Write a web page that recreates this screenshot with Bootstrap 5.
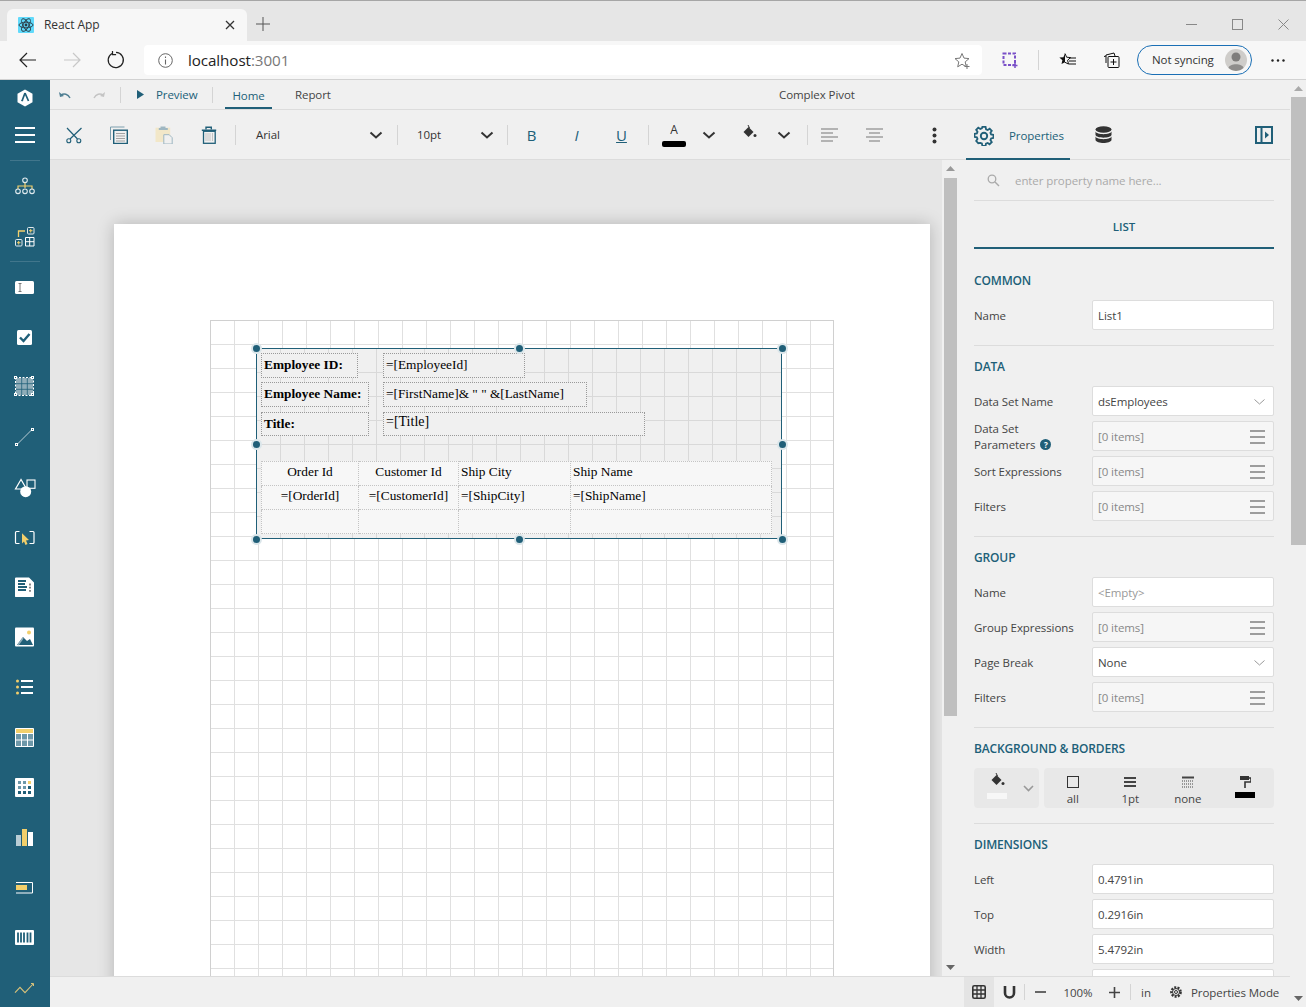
<!DOCTYPE html>
<html lang="en"><head><meta charset="utf-8"><title>React App</title>
<link href="https://cdn.jsdelivr.net/npm/bootstrap@5.3.0/dist/css/bootstrap.min.css" rel="stylesheet">
<style>
html,body{height:1007px;overflow:hidden}
body{font-family:"Open Sans","Liberation Sans",sans-serif;font-size:11.5px;letter-spacing:-.08px;color:#444;background:#f0f0f0;line-height:16px}
svg{display:block;flex:none}
.w1{width:1px}.w20{width:20px}.w26{width:26px}.w30{width:30px}.w32{width:32px}.w40{width:40px}.w43{width:43px}.w46{width:46px}.w50{width:50px}.w52{width:52px}.w56{width:56px}
.ml1{margin-left:1px}.ml3{margin-left:3px}.ml4{margin-left:4px}.ml8{margin-left:8px}.ml10{margin-left:10px}.ml13{margin-left:13px}.ml14{margin-left:14px}.ml15{margin-left:15px}.ml16{margin-left:16px}.ml17{margin-left:17px}.ml18{margin-left:18px}
.h16{height:16px}.h20{height:20px}
.tabstrip{height:41px;background:#e6e6e6;border-top:1px solid #a6a6a6;padding:8px 0 0 7px}
.btab{width:240px;height:32px;background:#f7f7f7;border-radius:6px 6px 0 0;padding:0 12px 0 11px;font-size:12px;color:#333}
.btab .ttl{margin-left:10px;width:170px}
.plus{margin:8px 0 0 9px}
.wins{height:30px}
.addr{height:39px;background:#f7f7f7;border-bottom:1px solid #d2d2d2;padding-left:6px}
.nb{width:44px;height:38px}
.urlbar{width:838px;height:30px;background:#fff;border-radius:4px;margin-left:6px;padding:0 11px 0 14px}
.urlbar .u{font-size:15.2px;color:#222;margin-left:15px}
.urlbar .u span{color:#777}
.sync{width:115px;height:30px;border:1px solid #1a6fb5;border-radius:15px;padding:0 4px 0 14px;font-size:11.5px;color:#333;margin-left:10px}
.app{height:927px}
.side{width:50px;background:#205f78}
.side .si{height:50px}
.side .sep{height:1px;background:#41768c;margin:0 10px}
.side .sep1{margin-top:5px;margin-bottom:1px}
.side .sep2{margin-top:-1px}
.mainc{width:1240px}
.menu{height:30px;border-bottom:1px solid #dcdcdc;padding-left:7px;white-space:nowrap}
.vs{width:1px;background:#d4d4d4;flex:none}
.accent{color:#205f78}
.prev{margin-left:12px;width:41px}
.hometab{width:47px;height:29px;margin-left:12px;border-bottom:2px solid #205f78;color:#205f78;text-align:center;line-height:32px}
.rep{margin-left:23px;width:35px}
.doc{margin-left:449px;width:80px}
.toolbar{height:50px;border-bottom:1px solid #dcdcdc;padding:1px 0 0 1px;white-space:nowrap}
.tb{width:45px;height:48px}
.tbt{font-size:15px}
.drop{height:48px;color:#333}
.dfont{width:161px;padding:0 14px 0 20px}
.dsize{width:109px;padding:0 13px 0 19px}
.acolor{width:50px;line-height:14px;color:#333;font-size:12px}
.abar{width:24px;height:6px;background:#000;border-radius:2px}
.fillup{margin-bottom:7px}
.ptab{width:104px;height:49px;margin:0 0 -1px 12px;padding:2px 0 0 8px;border-bottom:2px solid #205f78;color:#205f78}
.collapse-i{margin-right:17px}
.work{height:816px}
.canvas{width:892px;background:#e6e6e6;padding:64px 0 0 64px;overflow:hidden}
.page{width:816px;height:900px;background:#fff;padding:96px 0 0 96px;box-shadow:0 0 16px rgba(0,0,0,.22)}
.gridarea{position:relative;width:624px;height:800px;border:1px solid #d0d0d0;background-color:#fff;background-image:linear-gradient(#e0e0e0 1px,transparent 1px),linear-gradient(90deg,#e0e0e0 1px,transparent 1px);background-size:24px 24px;background-position:-1px -1px}
.list{position:absolute;left:45px;top:27px;width:526px;height:191px;border:1px solid #205f78;background-color:#f0f0f0;background-image:linear-gradient(#d9d9d9 1px,transparent 1px),linear-gradient(90deg,#d9d9d9 1px,transparent 1px);background-size:24px 24px;background-position:-1px -1px}
.rb{position:absolute;border:1px dotted #999;background:#f0f0f0;font-family:"Liberation Serif",serif;font-size:13.33px;letter-spacing:0;color:#000;padding:0 0 2px 2px;display:flex;align-items:center;white-space:nowrap;height:25px}
.rb.b{font-weight:700}
.c1{left:4px}.c2{left:126px}
.y1{top:4px}.y2{top:33px}.y3{top:63px;height:24px;padding-bottom:0}
.wa{width:97px}.wb{width:108px}.wc{width:142px}.wd{width:204px}.we{width:262px}
.rb.tt{align-items:flex-start;font-size:14px;padding-top:1px}
.rt{position:absolute;left:4px;top:112px;width:511px;height:73px;border-collapse:collapse;background:#f7f7f7;font-family:"Liberation Serif",serif;font-size:13.33px;letter-spacing:0;color:#000;table-layout:fixed}
.rt col:nth-child(1){width:97px}.rt col:nth-child(2){width:100px}.rt col:nth-child(3){width:112px}
.rt td{border:1px dotted #c4c4c4;padding:2px 2px 0;height:24px;white-space:nowrap;line-height:16px;vertical-align:top}
.h{position:absolute;width:11px;height:11px;border-radius:50%;background:#205f78;border:2px solid #dbe6ea;margin:-5.5px 0 0 -5.5px}
.hx1{left:45px}.hx2{left:308px}.hx3{left:571px}.hy1{top:27px}.hy2{top:123px}.hy3{top:218px}
.vscroll{width:16px;background:#f0f0f0}
.thumb{background:#bfbfbf}
.au1{margin-top:6px}.ad{margin-bottom:6px}
.t1{width:13px;height:538px;margin-top:7px}
.t2{width:15px;height:448px;margin-top:6px}
.panel{width:332px;padding:0 16px;overflow:hidden}
.search{height:41px;border-bottom:1px solid #dcdcdc;padding:1px 0 0 13px;color:#aaa}
.listh{height:48px;border-bottom:2px solid #205f78;color:#205f78;font-weight:600;text-align:center;line-height:52px}
.sec{padding:13px 0 15px;border-bottom:1px solid #dcdcdc}
.sec.first{padding-top:24px}
.sect{height:16px;margin-bottom:11px;color:#205f78;font-weight:600;font-size:12px;letter-spacing:-.15px}
.r{height:30px;margin-bottom:5px}
.r:last-child{margin-bottom:0}
.r .l{width:118px;flex:none;padding-top:1px}
.f{width:182px;height:30px;padding:1px 5px 0;border:1px solid #ddd;border-radius:2px;background:#fff;font-size:11.5px;color:#444;line-height:28px;display:flex;align-items:center;justify-content:space-between}
.f.ro{background:#f6f6f6;color:#888;padding-right:8px}
.f.emp{color:#999}
.dd{margin-right:3px}
.q{display:inline-block;width:11px;height:11px;border-radius:50%;background:#205f78;color:#fff;font-size:8px;line-height:11px;text-align:center;font-weight:700;margin-left:5px;vertical-align:1px}
.bgrow{gap:5px}
.bgb{background:#e8e8e8;height:40px}
.bfill{width:65px;padding:0 0 5px 13px}
.bfill .bk{margin-left:3px}
.swatch{width:20px;height:6px;background:#f7f7f7;margin-top:6px}
.bchev{margin:5px 0 0 16px}
.bseg{width:230px}
.seg{flex:1;text-align:center;padding-top:8px;line-height:14px}
.seg svg{margin:0 auto 4px}
.roller{width:20px;height:6px;background:#000;margin:4px auto 0}
.status{height:31px;border-top:1px solid #dcdcdc;white-space:nowrap}
.status span{padding-top:1px}
.gridbtn{width:30px;height:30px;background:#e4e4e4;margin-left:914px}
.pct{width:46px}
.pscroll{width:16px;background:#f0f0f0}
</style></head><body>

<div class="tabstrip d-flex">
  <div class="btab d-flex align-items-center">
    <svg width="16" height="16" viewBox="0 0 16 16"><rect width="16" height="16" rx="1" fill="#61dafb"/><g fill="none" stroke="#2a3a44" stroke-width=".9"><ellipse cx="8" cy="8" rx="7" ry="2.8"/><ellipse cx="8" cy="8" rx="7" ry="2.8" transform="rotate(60 8 8)"/><ellipse cx="8" cy="8" rx="7" ry="2.8" transform="rotate(120 8 8)"/></g><circle cx="8" cy="8" r="1.4" fill="#2a3a44"/></svg>
    <span class="ttl">React App</span>
    <svg class="ms-auto" width="10" height="10" viewBox="0 0 10 10"><path d="M1 1l8 8M9 1l-8 8" stroke="#333" stroke-width="1.3"/></svg>
  </div>
  <svg class="plus" width="14" height="14" viewBox="0 0 14 14"><path d="M7 0v14M0 7h14" stroke="#555" stroke-width="1"/></svg>
  <div class="ms-auto d-flex align-items-center wins">
    <div class="w46 d-flex justify-content-center"><svg width="11" height="11" viewBox="0 0 11 11"><path d="M0 5.500h11" stroke="#888"/></svg></div>
    <div class="w46 d-flex justify-content-center"><svg width="11" height="11" viewBox="0 0 11 11"><rect x=".5" y=".5" width="10" height="10" fill="none" stroke="#888"/></svg></div>
    <div class="w46 d-flex justify-content-center"><svg width="11" height="11" viewBox="0 0 11 11"><path d="M.5.500l10 10M10.500.500l-10 10" stroke="#888"/></svg></div>
  </div>
</div>

<div class="addr d-flex align-items-center">
  <div class="nb d-flex align-items-center justify-content-center"><svg width="18" height="16" viewBox="0 0 18 16"><path d="M17 8H1M8 1L1 8l7 7" fill="none" stroke="#222" stroke-width="1.2"/></svg></div>
  <div class="nb d-flex align-items-center justify-content-center"><svg width="18" height="16" viewBox="0 0 18 16"><path d="M1 8h16M10 1l7 7-7 7" fill="none" stroke="#c8c8c8" stroke-width="1.2"/></svg></div>
  <div class="nb d-flex align-items-center justify-content-center"><svg width="18" height="18" viewBox="0 0 18 18"><path d="M5 2.400A7.600 7.600 0 1 0 9 1.400" fill="none" stroke="#222" stroke-width="1.2"/><path d="M5.500 0v3.600h3.600" fill="none" stroke="#222" stroke-width="1.2"/></svg></div>
  <div class="urlbar d-flex align-items-center">
    <svg width="15" height="15" viewBox="0 0 15 15"><circle cx="7.500" cy="7.500" r="6.800" fill="none" stroke="#666"/><path d="M7.500 6.500v5M7.500 3.500v1.500" stroke="#666" stroke-width="1.100"/></svg>
    <span class="u">localhost<span>:3001</span></span>
    <svg class="ms-auto" width="17" height="17" viewBox="0 0 17 17"><path d="M8 1.500l2 4.600 5 .5-3.800 3.300 1.100 4.900L8 12.200l-4.300 2.600 1.100-4.900L1 6.600l5-.5z" fill="none" stroke="#777"/><path d="M13 12v5M10.500 14.500h5" stroke="#777"/></svg>
  </div>
  <div class="w56 d-flex align-items-center justify-content-center"><svg width="16" height="16" viewBox="0 0 16 16"><rect x="1.500" y="1.500" width="11.500" height="11.500" fill="none" stroke="#7a50c8" stroke-width="2" stroke-dasharray="3 1.500"/><path d="M13 11v5M10.500 13.500h5" stroke="#7a50c8" stroke-width="1.500"/></svg></div>
  <div class="vs h20"></div>
  <div class="w56 d-flex align-items-center justify-content-center"><svg width="17" height="17" viewBox="0 0 17 17"><path d="M6 1.500l1.600 3.700 4 .4-3 2.600.9 3.900L6 10.300" fill="none" stroke="#111"/><path d="M6 1.500L4.400 5.200l-4 .4 3 2.600-.9 3.900L6 10.300" fill="#111"/><path d="M10 6h7M10 9h7M10 12h7" stroke="#111" stroke-width="1.100"/></svg></div>
  <div class="w32 d-flex align-items-center justify-content-center"><svg width="17" height="16" viewBox="0 0 17 16"><path d="M3 11V3l8-2 1 3" fill="none" stroke="#111"/><path d="M1 4.500l2-.5" stroke="#111"/><rect x="5" y="4.500" width="11" height="11" rx="1" fill="none" stroke="#111"/><path d="M10.500 7v6M7.500 10h6" stroke="#111"/></svg></div>
  <div class="sync d-flex align-items-center"><span>Not syncing</span>
    <svg class="ms-auto" width="22" height="22" viewBox="0 0 22 22"><circle cx="11" cy="11" r="11" fill="#cfcdca"/><circle cx="11" cy="8" r="4.500" fill="#7f7d7b"/><path d="M3.500 19c1-5 14-5 15 0a11 11 0 0 1-15 0z" fill="#8f8d8b"/></svg></div>
  <div class="w52 d-flex align-items-center justify-content-center"><svg width="14" height="3" viewBox="0 0 14 3"><circle cx="1.500" cy="1.500" r="1.200" fill="#222"/><circle cx="7" cy="1.500" r="1.200" fill="#222"/><circle cx="12.500" cy="1.500" r="1.200" fill="#222"/></svg></div>
</div>

<div class="app d-flex">
  <nav class="side flex-none">
    <svg width="50" height="35" viewBox="0 0 50 35"><path d="M25 9.500l7.500 4.200v8.600L25 26.500l-7.500-4.200v-8.600z" fill="#fff"/><path d="M25 13l-3 8M25 13l3.500 8M23 19.500l-1.500 1.500" stroke="#205f78" stroke-width="1.700" fill="none"/></svg>
    <svg width="50" height="40" viewBox="0 0 50 40"><path d="M15 13h20M15 20h20M15 27h20" stroke="#fff" stroke-width="2"/></svg>
    <div class="sep sep1"></div>
    <div class="si"><svg width="50" height="50" viewBox="0 0 50 50"><path d="M25 21v5M18 30v-6h14v6" fill="none" stroke="#f2cf6b" stroke-width="1.200"/><g fill="#205f78" stroke="#dfeaee" stroke-width="1.100"><circle cx="25" cy="18.300" r="2.300"/><circle cx="18" cy="29.300" r="2.300"/><circle cx="25" cy="29.300" r="2.300"/><circle cx="32" cy="29.300" r="2.300"/></g></svg></div>
    <div class="si"><svg width="50" height="50" viewBox="0 0 50 50"><path d="M18.500 25v-6h6.500" fill="none" stroke="#f2cf6b" stroke-width="1.300"/><rect x="27.500" y="15.500" width="6.500" height="6.500" rx="1" fill="none" stroke="#dfeaee"/><path d="M30.700 17v3.500M29 18.700h3.500" stroke="#f2cf6b"/><rect x="15.500" y="27.500" width="6.500" height="6.500" rx="1" fill="none" stroke="#dfeaee"/><path d="M18.700 29v3.500M17 30.700h3.500" stroke="#f2cf6b"/><path d="M25.500 25.500h8.500v8.500h-8.500zM29.700 25.500v8.500M25.500 29.700h8.500" fill="none" stroke="#fff"/></svg></div>
    <div class="sep sep2"></div>
    <div class="si"><svg width="50" height="50" viewBox="0 0 50 50"><rect x="15" y="19" width="19" height="13" rx="1.500" fill="#fff"/><path d="M18.500 21.500h3M18.500 29.500h3M20 21.500v8" stroke="#777" stroke-width="1"/></svg></div>
    <div class="si"><svg width="50" height="50" viewBox="0 0 50 50"><rect x="17" y="18" width="15" height="15" rx="1.500" fill="#fff"/><path d="M20 25.500l3.500 3.500 6-7" fill="none" stroke="#205f78" stroke-width="2.400"/></svg></div>
    <div class="si"><svg width="50" height="50" viewBox="0 0 50 50"><rect x="16" y="16" width="17" height="17" fill="#8fadb9"/><path d="M21.700 16v17M27.300 16v17M16 21.700h17M16 27.300h17" stroke="#205f78" stroke-width=".8"/><rect x="15.500" y="15.500" width="18" height="18" fill="none" stroke="#fff" stroke-dasharray="2 1.500"/><g fill="#205f78" stroke="#fff"><rect x="14.500" y="14.500" width="2" height="2"/><rect x="31.500" y="14.500" width="2" height="2"/><rect x="14.500" y="31.500" width="2" height="2"/><rect x="31.500" y="31.500" width="2" height="2"/></g></svg></div>
    <div class="si"><svg width="50" height="50" viewBox="0 0 50 50"><path d="M16.500 33l15.500-15.500" stroke="#b9cdd5"/><g fill="#205f78" stroke="#fff"><rect x="15.500" y="31.500" width="2" height="2"/><rect x="31.500" y="16.500" width="2" height="2"/></g></svg></div>
    <div class="si"><svg width="50" height="50" viewBox="0 0 50 50"><path d="M21 17.500l-5.500 9.500h11z" fill="none" stroke="#fff" stroke-width="1.200"/><rect x="27" y="18" width="8" height="8.300" fill="none" stroke="#fff" stroke-width="1.100"/><circle cx="25.700" cy="29.700" r="5.500" fill="#fff"/></svg></div>
    <div class="si"><svg width="50" height="50" viewBox="0 0 50 50"><path d="M19.500 19.500h-3a1 1 0 0 0-1 1v10a1 1 0 0 0 1 1h3M29.500 19.500h3.500a1 1 0 0 1 1 1v10a1 1 0 0 1-1 1h-3.500" fill="none" stroke="#fff" stroke-width="1.200"/><path d="M22 21.300l7 6.700-3 .5 1.500 3.500-2 1-1.500-3.500-2 2z" fill="#f2cf6b"/></svg></div>
    <div class="si"><svg width="50" height="50" viewBox="0 0 50 50"><path d="M16 15.500h13l5 5V34a.8.8 0 0 1-1 1H16a.8.8 0 0 1-1-1V16.500a1 1 0 0 1 1-1z" fill="#fff"/><path d="M18 19h8M18 22h7M18 25h9M18 28h8" stroke="#205f78" stroke-width="1.800"/><path d="M29 22.500h2M29 25.700h2M29 28.900h2" stroke="#888" stroke-width="1.800"/></svg></div>
    <div class="si"><svg width="50" height="50" viewBox="0 0 50 50"><rect x="15" y="15.500" width="19" height="19" rx="1" fill="#fff"/><circle cx="29" cy="20.500" r="2" fill="#f2cf6b"/><path d="M17 33l6-8 4 4 3-2 3 6z" fill="#205f78"/><path d="M18 33l5-7" stroke="#8fadb9" stroke-width="1.500"/></svg></div>
    <div class="si"><svg width="50" height="50" viewBox="0 0 50 50"><circle cx="17.500" cy="19" r="1.500" fill="#f2cf6b"/><circle cx="17.500" cy="25" r="1.500" fill="#f2cf6b"/><circle cx="17.500" cy="31" r="1.500" fill="#f2cf6b"/><path d="M21 19h12M21 25h12M21 31h12" stroke="#fff" stroke-width="2"/></svg></div>
    <div class="si"><svg width="50" height="50" viewBox="0 0 50 50"><rect x="15" y="16" width="19" height="19" rx="1" fill="#fff"/><rect x="16" y="17" width="17" height="4" fill="#f2cf6b"/><g fill="#6e98a9"><rect x="16" y="22" width="5" height="5.500"/><rect x="22" y="22" width="5" height="5.500"/><rect x="28" y="22" width="5" height="5.500"/><rect x="16" y="28.500" width="5" height="5.500"/><rect x="22" y="28.500" width="5" height="5.500"/><rect x="28" y="28.500" width="5" height="5.500"/></g></svg></div>
    <div class="si"><svg width="50" height="50" viewBox="0 0 50 50"><rect x="15" y="16" width="19" height="19" rx="1" fill="#fff"/><g fill="#6e98a9"><rect x="18" y="19" width="3" height="3"/><rect x="23" y="19" width="3" height="3"/><rect x="18" y="24" width="3" height="3"/><rect x="23" y="24" width="3" height="3"/></g><rect x="28" y="19" width="3" height="3" fill="#f2cf6b"/><g fill="#205f78"><rect x="28" y="24" width="3" height="3"/><rect x="18" y="29" width="3" height="3"/><rect x="23" y="29" width="3" height="3"/><rect x="28" y="29" width="3" height="3"/></g></svg></div>
    <div class="si"><svg width="50" height="50" viewBox="0 0 50 50"><rect x="16" y="23" width="5" height="11" fill="#b9cdd5"/><rect x="22" y="17" width="5" height="17" fill="#f2cf6b"/><rect x="28" y="20" width="5" height="14" fill="#fff"/></svg></div>
    <div class="si"><svg width="50" height="50" viewBox="0 0 50 50"><path d="M16 20.500h16.500v10.500H16" fill="none" stroke="#fff" stroke-width="1"/><rect x="16" y="23" width="11" height="5" fill="#f2cf6b"/></svg></div>
    <div class="si"><svg width="50" height="50" viewBox="0 0 50 50"><rect x="15" y="18" width="19" height="15" rx="1" fill="#fff"/><path d="M18 20.500v10M21 20.500v10M24 20.500v10M27.500 20.500v10M30.500 20.500v10" stroke="#205f78" stroke-width="1.800"/></svg></div>
    <div class="si"><svg width="50" height="50" viewBox="0 0 50 50"><path d="M15 30.700l5-5.400 5 5.400 8-8.700" fill="none" stroke="#d9c27a" stroke-width="1.100"/><path d="M31 21.500h2.500V24" fill="none" stroke="#d9c27a"/></svg></div>
  </nav>

  <div class="mainc d-flex flex-column">
    <div class="menu d-flex align-items-center">
      <svg width="16" height="10" viewBox="0 0 16 10"><path d="M13 8c-2-4-6-5-9-3" fill="none" stroke="#4f7f93" stroke-width="1.400"/><path d="M2 2l1 5 4-1z" fill="#4f7f93"/></svg>
      <svg class="ml18" width="16" height="10" viewBox="0 0 16 10"><path d="M3 8c2-4 6-5 9-3" fill="none" stroke="#c4c4c4" stroke-width="1.400"/><path d="M14 2l-1 5-4-1z" fill="#c4c4c4"/></svg>
      <div class="vs h16 ml13"></div>
      <svg class="ml16" width="7" height="9" viewBox="0 0 7 9"><path d="M0 0l7 4.500L0 9z" fill="#205f78"/></svg>
      <span class="accent prev">Preview</span>
      <div class="vs h16 ml15"></div>
      <div class="hometab">Home</div>
      <span class="rep">Report</span>
      <span class="doc">Complex Pivot</span>
    </div>

    <div class="toolbar d-flex align-items-center">
      <div class="tb d-flex align-items-center justify-content-center"><svg width="16" height="18" viewBox="0 0 16 18"><path d="M1 2l10.500 11M15.500 2L4 13" stroke="#205f78" stroke-width="1.200"/><circle cx="2.800" cy="14.700" r="2" fill="none" stroke="#205f78" stroke-width="1.100"/><circle cx="12.800" cy="14.700" r="2" fill="none" stroke="#205f78" stroke-width="1.100"/></svg></div>
      <div class="tb d-flex align-items-center justify-content-center"><svg width="18" height="18" viewBox="0 0 18 18"><path d="M.5 14V1h14" fill="none" stroke="#7d9fae"/><rect x="3.700" y="4.200" width="13.600" height="13.300" fill="#f0f0f0" stroke="#205f78" stroke-width="1.400"/><path d="M6 7.500h9M6 10h9M6 12.500h9M6 15h9" stroke="#999" stroke-width=".9"/></svg></div>
      <div class="tb d-flex align-items-center justify-content-center"><svg width="18" height="18" viewBox="0 0 18 18"><rect x=".5" y="1.700" width="14.700" height="14.300" fill="#f2e7c8"/><path d="M5.500 1.500h5M3.800 3h9" stroke="#9fb7c2" stroke-width="2"/><path d="M8.800 8.700h5.400l3 3V18H8.800z" fill="#f0f0f0" stroke="#9fb7c2"/></svg></div>
      <div class="tb d-flex align-items-center justify-content-center"><svg width="16" height="18" viewBox="0 0 16 18"><path d="M.8 4.300h14.400M5 3.300V1.200h5.300v2.100" fill="none" stroke="#205f78" stroke-width="1.400"/><rect x="2.500" y="5.300" width="11.700" height="12" fill="#f0f0f0" stroke="#205f78" stroke-width="1.300"/><path d="M5 7.500v8M7 7.500v8M9 7.500v8M11.500 7.500v8" stroke="#999" stroke-dasharray="1 1"/></svg></div>
      <div class="vs h20 ml4"></div>
      <div class="drop dfont d-flex align-items-center justify-content-between"><span>Arial</span><svg width="14" height="8" viewBox="0 0 14 8"><path d="M1.500 1.500L7 6.500l5.500-5" fill="none" stroke="#333" stroke-width="2"/></svg></div>
      <div class="vs h20"></div>
      <div class="drop dsize d-flex align-items-center justify-content-between"><span>10pt</span><svg width="14" height="8" viewBox="0 0 14 8"><path d="M1.500 1.500L7 6.500l5.500-5" fill="none" stroke="#333" stroke-width="2"/></svg></div>
      <div class="vs h20"></div>
      <div class="tb tbt ml1 d-flex align-items-center justify-content-center accent">B</div>
      <div class="tb tbt fst-italic d-flex align-items-center justify-content-center accent">I</div>
      <div class="tb tbt text-decoration-underline d-flex align-items-center justify-content-center accent">U</div>
      <div class="vs h20 ml4"></div>
      <div class="acolor d-flex flex-column align-items-center">A<div class="abar mt-1"></div></div>
      <div class="w20 d-flex justify-content-center"><svg width="14" height="8" viewBox="0 0 14 8"><path d="M1.500 1.500L7 6.500l5.500-5" fill="none" stroke="#333" stroke-width="2"/></svg></div>
      <div class="w40 ml10 d-flex justify-content-center"><svg class="fillup" width="15" height="14" viewBox="0 0 15 14"><path d="M6.500 2l5 5-5 5-5-5z" fill="#333"/><path d="M6 0l1.500 3" stroke="#333"/><circle cx="13" cy="10.500" r="1.500" fill="#333"/></svg></div>
      <div class="w30 d-flex justify-content-center"><svg width="14" height="8" viewBox="0 0 14 8"><path d="M1.500 1.500L7 6.500l5.500-5" fill="none" stroke="#333" stroke-width="2"/></svg></div>
      <div class="vs h20 ml8"></div>
      <div class="w43 d-flex justify-content-center"><svg width="17" height="15" viewBox="0 0 17 15"><path d="M0 1h17M0 5h12M0 9h17M0 13h12" stroke="#777"/></svg></div>
      <div class="w46 d-flex justify-content-center"><svg width="17" height="15" viewBox="0 0 17 15"><path d="M0 1h17M3 5h11M0 9h17M3 13h11" stroke="#777"/></svg></div>
      <div class="w40 ml17 d-flex justify-content-center"><svg width="5" height="17" viewBox="0 0 5 17"><circle cx="2.500" cy="2.500" r="2" fill="#333"/><circle cx="2.500" cy="8.500" r="2" fill="#333"/><circle cx="2.500" cy="14.500" r="2" fill="#333"/></svg></div>
      <div class="ptab d-flex align-items-center"><svg width="20" height="20" viewBox="0 0 20 20"><path d="M8.300 1h3.400l.5 2.500 1.700.7 2.100-1.400 2.200 2.300-1.400 2.100.7 1.700 2.500.5v3.200l-2.500.5-.7 1.700 1.400 2.100-2.300 2.300-2-1.400-1.800.7-.4 2.400H8.300l-.5-2.500-1.700-.7L4 18.100 1.800 15.800l1.400-2.100-.7-1.700L0 11.500V8.300l2.500-.5.7-1.700-1.400-2.100L4 1.700l2.100 1.400 1.700-.7z" transform="scale(.95) translate(.5 0)" fill="none" stroke="#205f78" stroke-width="1.900"/><circle cx="10" cy="10" r="3.200" fill="none" stroke="#205f78" stroke-width="1.900"/></svg><span class="ml15">Properties</span></div>
      <div class="w30 ml18 d-flex justify-content-center"><svg width="17" height="18" viewBox="0 0 17 18"><ellipse cx="8.500" cy="3.500" rx="8" ry="3.300" fill="#333"/><path d="M.5 5.500c1 3.500 15 3.500 16 0V9c-1 3.500-15 3.500-16 0z" fill="#333"/><path d="M.5 10.500c1 3.500 15 3.500 16 0V14c-1 4-15 4-16 0z" fill="#333"/></svg></div>
      <div class="ms-auto collapse-i"><svg width="18" height="18" viewBox="0 0 18 18"><rect x="1" y="1" width="16" height="16" fill="none" stroke="#205f78" stroke-width="2"/><path d="M6.500 1v16" stroke="#205f78" stroke-width="2"/><path d="M10 5.500l4 3.500-4 3.500z" fill="#205f78"/></svg></div>
    </div>

    <div class="work d-flex">
      <div class="canvas">
        <div class="page">
          <div class="gridarea">
            <div class="list">
              <div class="rb b c1 y1 wa">Employee ID:</div>
              <div class="rb c2 y1 wc">=[EmployeeId]</div>
              <div class="rb b c1 y2 wb">Employee Name:</div>
              <div class="rb c2 y2 wd">=[FirstName]&amp; " " &amp;[LastName]</div>
              <div class="rb b c1 y3 wb">Title:</div>
              <div class="rb tt c2 y3 we">=[Title]</div>
              <table class="rt"><colgroup><col><col><col><col></colgroup>
                <tr><td class="text-center">Order Id</td><td class="text-center">Customer Id</td><td>Ship City</td><td>Ship Name</td></tr>
                <tr><td class="text-center">=[OrderId]</td><td class="text-center">=[CustomerId]</td><td>=[ShipCity]</td><td>=[ShipName]</td></tr>
                <tr><td></td><td></td><td></td><td></td></tr>
              </table>
            </div>
            <i class="h hx1 hy1"></i><i class="h hx2 hy1"></i><i class="h hx3 hy1"></i>
            <i class="h hx1 hy2"></i><i class="h hx3 hy2"></i>
            <i class="h hx1 hy3"></i><i class="h hx2 hy3"></i><i class="h hx3 hy3"></i>
          </div>
        </div>
      </div>
      <div class="vscroll d-flex flex-column align-items-center">
        <svg class="au1" width="9" height="5" viewBox="0 0 9 5"><path d="M0 5l4.500-5L9 5z" fill="#999"/></svg>
        <div class="thumb t1"></div>
        <svg class="mt-auto ad" width="9" height="5" viewBox="0 0 9 5"><path d="M0 0l4.500 5L9 0z" fill="#666"/></svg>
      </div>
      <aside class="panel">
        <div class="search d-flex align-items-center"><svg width="13" height="13" viewBox="0 0 13 13"><circle cx="5" cy="5" r="3.800" fill="none" stroke="#aaa" stroke-width="1.300"/><path d="M8 8l4 4" stroke="#aaa" stroke-width="1.500"/></svg><span class="ml15">enter property name here...</span></div>
        <div class="listh">LIST</div>
        <div class="sec first">
          <div class="sect">COMMON</div>
          <div class="r d-flex align-items-center"><div class="l">Name</div><div class="f">List1</div></div>
        </div>
        <div class="sec">
          <div class="sect">DATA</div>
          <div class="r d-flex align-items-center"><div class="l">Data Set Name</div><div class="f">dsEmployees<svg class="dd" width="11" height="6" viewBox="0 0 11 6"><path d="M.5.500L5.500 5l5-4.500" fill="none" stroke="#999"/></svg></div></div>
          <div class="r d-flex align-items-center"><div class="l">Data Set<br>Parameters<span class="q">?</span></div><div class="f ro">[0 items]<svg width="15" height="14" viewBox="0 0 15 14"><path d="M0 1h15M0 7h15M0 13h15" stroke="#444"/></svg></div></div>
          <div class="r d-flex align-items-center"><div class="l">Sort Expressions</div><div class="f ro">[0 items]<svg width="15" height="14" viewBox="0 0 15 14"><path d="M0 1h15M0 7h15M0 13h15" stroke="#444"/></svg></div></div>
          <div class="r d-flex align-items-center"><div class="l">Filters</div><div class="f ro">[0 items]<svg width="15" height="14" viewBox="0 0 15 14"><path d="M0 1h15M0 7h15M0 13h15" stroke="#444"/></svg></div></div>
        </div>
        <div class="sec">
          <div class="sect">GROUP</div>
          <div class="r d-flex align-items-center"><div class="l">Name</div><div class="f emp">&lt;Empty&gt;</div></div>
          <div class="r d-flex align-items-center"><div class="l">Group Expressions</div><div class="f ro">[0 items]<svg width="15" height="14" viewBox="0 0 15 14"><path d="M0 1h15M0 7h15M0 13h15" stroke="#444"/></svg></div></div>
          <div class="r d-flex align-items-center"><div class="l">Page Break</div><div class="f">None<svg class="dd" width="11" height="6" viewBox="0 0 11 6"><path d="M.5.500L5.500 5l5-4.500" fill="none" stroke="#999"/></svg></div></div>
          <div class="r d-flex align-items-center"><div class="l">Filters</div><div class="f ro">[0 items]<svg width="15" height="14" viewBox="0 0 15 14"><path d="M0 1h15M0 7h15M0 13h15" stroke="#444"/></svg></div></div>
        </div>
        <div class="sec">
          <div class="sect">BACKGROUND &amp; BORDERS</div>
          <div class="d-flex bgrow">
            <div class="bgb bfill d-flex align-items-center rounded-1">
              <div><svg class="bk" width="15" height="14" viewBox="0 0 15 14"><path d="M6.500 2l5 5-5 5-5-5z" fill="#333"/><path d="M6 0l1.500 3" stroke="#333"/><circle cx="13" cy="10.500" r="1.500" fill="#333"/></svg><div class="swatch"></div></div>
              <svg class="bchev" width="11" height="7" viewBox="0 0 11 7"><path d="M1 1l4.500 4.500L10 1" fill="none" stroke="#999" stroke-width="1.600"/></svg>
            </div>
            <div class="bgb bseg d-flex rounded-1">
              <div class="seg"><svg width="12" height="12" viewBox="0 0 12 12"><rect x=".5" y=".5" width="11" height="11" fill="none" stroke="#333"/></svg>all</div>
              <div class="seg"><svg width="12" height="12" viewBox="0 0 12 12"><path d="M0 2h12M0 6h12M0 10h12" stroke="#444" stroke-width="2"/></svg>1pt</div>
              <div class="seg"><svg width="12" height="12" viewBox="0 0 12 12"><path d="M0 1.500h12" stroke="#444" stroke-width="2"/><path d="M0 5h12M0 8h12M0 11h12" stroke="#444" stroke-dasharray="1 1"/></svg>none</div>
              <div class="seg"><svg width="12" height="12" viewBox="0 0 12 12"><path d="M1 0h9v4H1z" fill="#333"/><path d="M10 2h2v4H6v6" fill="none" stroke="#333" stroke-width="1.600"/></svg><div class="roller"></div></div>
            </div>
          </div>
        </div>
        <div class="sec border-0">
          <div class="sect">DIMENSIONS</div>
          <div class="r d-flex align-items-center"><div class="l">Left</div><div class="f">0.4791in</div></div>
          <div class="r d-flex align-items-center"><div class="l">Top</div><div class="f">0.2916in</div></div>
          <div class="r d-flex align-items-center"><div class="l">Width</div><div class="f">5.4792in</div></div>
          <div class="r d-flex align-items-center"><div class="l"></div><div class="f"></div></div>
        </div>
      </aside>
    </div>

    <div class="status d-flex align-items-center">
      <div class="gridbtn d-flex align-items-center justify-content-center"><svg width="14" height="14" viewBox="0 0 14 14"><rect x=".8" y=".8" width="12.400" height="12.400" rx="1.500" fill="none" stroke="#333" stroke-width="1.600"/><path d="M5 1v12M9 1v12M1 5h12M1 9h12" stroke="#333" stroke-width="1.300"/></svg></div>
      <div class="w30 d-flex justify-content-center"><svg width="13" height="13" viewBox="0 0 13 13"><path d="M2 0v7a4.500 4.500 0 0 0 9 0V0" fill="none" stroke="#333" stroke-width="2.600"/></svg></div>
      <div class="vs h16"></div>
      <div class="w30 d-flex justify-content-center"><svg width="11" height="2" viewBox="0 0 11 2"><path d="M0 1h11" stroke="#444" stroke-width="1.600"/></svg></div>
      <span class="pct text-center">100%</span>
      <div class="w26 d-flex justify-content-center"><svg width="11" height="11" viewBox="0 0 11 11"><path d="M0 5.500h11M5.500 0v11" stroke="#444" stroke-width="1.600"/></svg></div>
      <div class="vs h16 ml3"></div>
      <span class="w30 text-center">in</span>
      <svg class="ml8" width="14" height="14" viewBox="0 0 14 14"><circle cx="7" cy="7" r="4.700" fill="none" stroke="#333" stroke-width="2.300" stroke-dasharray="2 1.300"/><circle cx="7" cy="7" r="3.500" fill="none" stroke="#333"/><circle cx="7" cy="7" r="1.500" fill="none" stroke="#333"/></svg>
      <span class="ml8">Properties Mode</span>
    </div>
  </div>

  <div class="pscroll d-flex flex-column align-items-center">
    <svg class="au1" width="9" height="5" viewBox="0 0 9 5"><path d="M0 5l4.500-5L9 5z" fill="#aaa"/></svg>
    <div class="thumb t2"></div>
    <svg class="mt-auto ad" width="9" height="5" viewBox="0 0 9 5"><path d="M0 0l4.500 5L9 0z" fill="#666"/></svg>
  </div>
</div>
<script src="https://cdn.jsdelivr.net/npm/bootstrap@5.3.0/dist/js/bootstrap.bundle.min.js"></script>
</body></html>
